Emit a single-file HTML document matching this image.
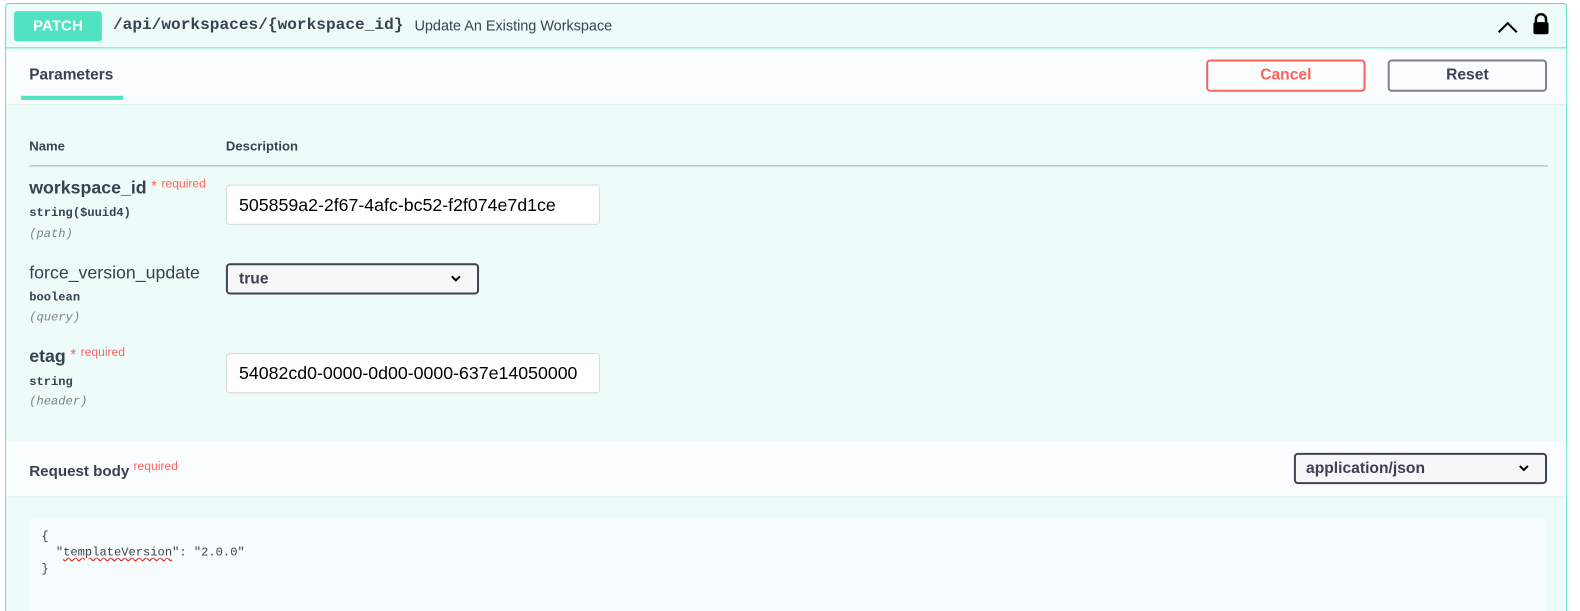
<!DOCTYPE html>
<html style="width:1580px;height:611px;overflow:hidden"><head><style>
*{box-sizing:border-box;margin:0;padding:0}
body{width:1580px;height:611px;overflow:hidden;background:#fff;font-family:"Liberation Sans",sans-serif;color:#3b4151;position:relative}
.wrap{position:absolute;left:0;top:0;width:1580px;height:611px;transform:scale(1.0085);transform-origin:0 0}
.blk{position:absolute;left:5px;top:3px;width:1549px;height:608px;border:1px solid #50e3c2;border-bottom:none;border-radius:4px 4px 0 0;background:#edfcf9;overflow:hidden}
.abs{position:absolute}
.mono{font-family:"Liberation Mono",monospace}
.badge{left:8px;top:7px;width:87px;height:30px;background:#50e3c2;border-radius:3px;color:#fff;font-weight:bold;font-size:15px;text-align:center;line-height:30px}
.sec{left:0;width:1549px;background:#f9fdfd;box-shadow:0 1px 2px rgba(0,0,0,.1)}
.btn{height:32px;border:2px solid;border-radius:4px;font-weight:bold;font-size:15.5px;text-align:center;line-height:28px;background:transparent}
.inp{height:40px;border:1px solid #d9d9d9;border-radius:4px;background:#fff;font-size:17.6px;color:#000;padding-left:12px;line-height:38px}
.pn{font-size:17.6px;color:#3b4151}
.req{color:#ff6060;font-size:12px}
.ty{font-size:12px;font-weight:600;color:#3b4151}
.loc{font-size:12px;font-style:italic;color:#808080}
</style></head><body>
<div class="wrap">
<div class="blk">
 <div class="abs badge">PATCH</div>
 <div class="abs mono" style="left:106px;top:12px;font-size:16px;font-weight:bold;color:#3b4151">/api/workspaces/{workspace_id}</div>
 <div class="abs" style="left:405px;top:14px;font-size:14.3px;color:#3b4151">Update An Existing Workspace</div>
 <svg class="abs" style="left:1479px;top:16px" width="20" height="14" viewBox="0 0 20 14"><path d="M1 12 L10 3 L19 12" fill="none" stroke="#000" stroke-width="2"/></svg>
 <svg class="abs" style="left:1513px;top:9px" width="18" height="22" viewBox="0 0 18 22"><path d="M4 10 V6 a5 5 0 0 1 10 0 V10" fill="none" stroke="#000" stroke-width="2.4"/><rect x="1.5" y="9" width="15" height="12" rx="2" fill="#000"/></svg>
 <div class="abs" style="left:0;top:43px;width:1549px;height:1px;background:#50e3c2"></div>
 <div class="abs sec" style="top:44px;height:55px"></div>
 <div class="abs" style="left:23px;top:62px;font-size:15.3px;font-weight:bold">Parameters</div>
 <div class="abs" style="left:15px;top:91px;width:101px;height:4px;background:#50e3c2"></div>
 <div class="abs btn" style="left:1190px;top:55px;width:158px;border-color:#ff6060;color:#ff6060">Cancel</div>
 <div class="abs btn" style="left:1370px;top:55px;width:158px;border-color:#808080;color:#3b4151">Reset</div>

 <div class="abs" style="left:23px;top:133px;font-size:13px;font-weight:bold">Name</div>
 <div class="abs" style="left:218px;top:133px;font-size:13px;font-weight:bold">Description</div>
 <div class="abs" style="left:23px;top:160px;width:1506px;height:1px;background:#a6b1b5"></div>

 <div class="abs" style="left:23px;top:171px;white-space:nowrap"><span style="font-size:17.6px;font-weight:bold">workspace_id</span> <span style="color:#ff6060;font-size:15px;vertical-align:3px">*</span> <span class="req" style="vertical-align:6px">required</span></div>
 <div class="abs mono ty" style="left:23px;top:200px">string($uuid4)</div>
 <div class="abs mono loc" style="left:23px;top:221px">(path)</div>
 <div class="abs inp" style="left:218px;top:179px;width:371px">505859a2-2f67-4afc-bc52-f2f074e7d1ce</div>

 <div class="abs pn" style="left:23px;top:256px">force_version_update</div>
 <div class="abs mono ty" style="left:23px;top:284px">boolean</div>
 <div class="abs mono loc" style="left:23px;top:304px">(query)</div>
 <div class="abs" style="left:218px;top:257px;width:251px;height:31px;border:2px solid #41444e;border-radius:4px;background:#f7f7f7;font-size:15.5px;font-weight:bold;padding-left:11px;line-height:27px">true
  <svg class="abs" style="left:220px;top:9px" width="12" height="9" viewBox="0 0 12 9"><path d="M2 2 L6 6 L10 2" fill="none" stroke="#000" stroke-width="2"/></svg></div>

 <div class="abs" style="left:23px;top:338px;white-space:nowrap"><span style="font-size:17.6px;font-weight:bold">etag</span> <span style="color:#ff6060;font-size:15px;vertical-align:3px">*</span> <span class="req" style="vertical-align:6px">required</span></div>
 <div class="abs mono ty" style="left:23px;top:368px">string</div>
 <div class="abs mono loc" style="left:23px;top:387px">(header)</div>
 <div class="abs inp" style="left:218px;top:346px;width:371px">54082cd0-0000-0d00-0000-637e14050000</div>

 <div class="abs sec" style="top:433px;height:55px"></div>
 <div class="abs" style="left:23px;top:451px;font-size:15px;font-weight:bold;white-space:nowrap">Request body <span class="req" style="font-weight:normal;vertical-align:6px">required</span></div>
 <div class="abs" style="left:1277px;top:445px;width:251px;height:31px;border:2px solid #41444e;border-radius:4px;background:#f7f7f7;font-size:15.5px;font-weight:bold;padding-left:10px;line-height:27px">application/json
  <svg class="abs" style="left:220px;top:9px" width="12" height="9" viewBox="0 0 12 9"><path d="M2 2 L6 6 L10 2" fill="none" stroke="#000" stroke-width="2"/></svg></div>

 <div class="abs" style="left:24px;top:510px;width:1504px;height:120px;background:#f7fdfd;border-radius:4px"></div>
 <pre class="abs mono" style="left:35px;top:520px;font-size:12px;line-height:16px;color:#3b4151">{
  "<span style="text-decoration:underline wavy #e03030">templateVersion</span>": "2.0.0"
}</pre>
</div>
</div>
</body></html>
